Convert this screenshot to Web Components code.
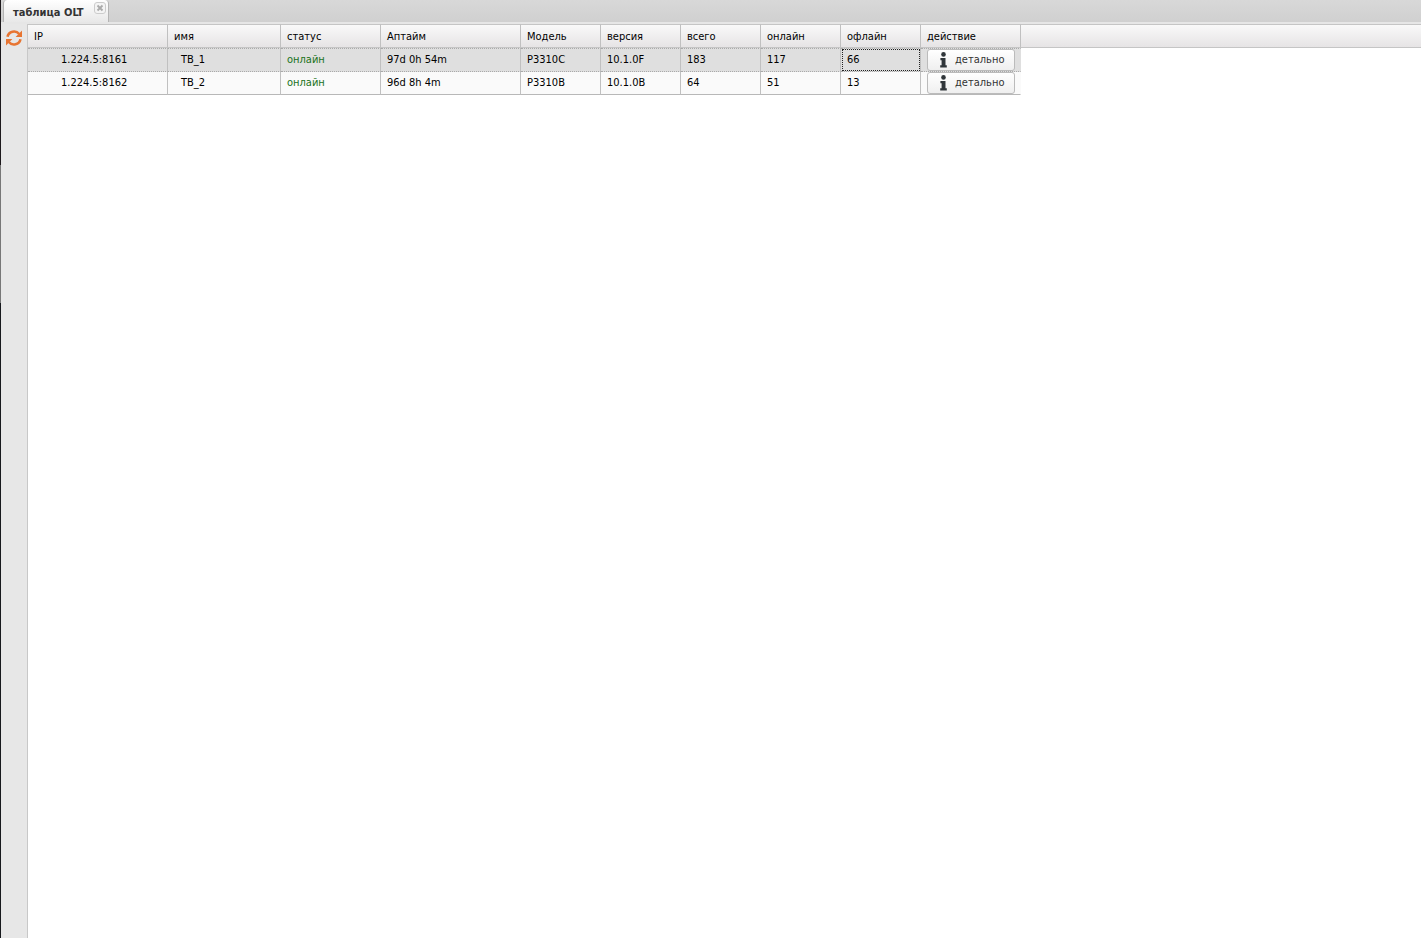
<!DOCTYPE html>
<html lang="ru">
<head>
<meta charset="utf-8">
<title>таблица OLT</title>
<style>
body {
    margin: 0;
    font-family: "DejaVu Sans Condensed", "Noto Sans", sans-serif;
    font-size: 11px;
    line-height: 14px;
    color: #000;
}
</style>
</head>
<body>
<olt-window>
    <tab-bar slot="tabs">таблица OLT</tab-bar>
    <side-tools slot="tools"></side-tools>
    <olt-table></olt-table>
</olt-window>

<script>
class OltWindow extends HTMLElement {
    constructor() {
        super();
        this.attachShadow({ mode: 'open' }).innerHTML = `
        <style>
        :host {
            display: flex;
            flex-direction: column;
            min-height: 100vh;
            box-sizing: border-box;
            padding-left: 1px;
            background: linear-gradient(#1d191c 0 165px, #777 165px 303px, #17191d 303px) no-repeat left / 1px 100%;
        }
        .body {
            display: flex;
            flex: 1;
            background: #fff;
        }
        main {
            flex: 1;
            min-width: 0;
        }
        </style>
        <slot name="tabs"></slot>
        <div class="body">
            <slot name="tools"></slot>
            <main><slot></slot></main>
        </div>
        `;
    }
}

class TabBar extends HTMLElement {
    constructor() {
        super();
        this.attachShadow({ mode: 'open' }).innerHTML = `
        <style>
        :host {
            display: flex;
            height: 24px;
            box-sizing: border-box;
            padding: 0 2px 2px;
            background: linear-gradient(#d8d8d8, #d0d0d0 22px, #e6e6e6 22px);
        }
        .tab {
            display: flex;
            box-sizing: border-box;
            padding-right: 2px;
            border: 1px solid #b4b4b4;
            border-top: 0;
            border-bottom: 0;
            border-radius: 4px 4px 0 0;
            background: linear-gradient(#fff, #e8e8e8);
        }
        button {
            font: inherit;
            color: #333;
            border: 0;
            background: none;
            cursor: pointer;
        }
        .title {
            padding: 3px 10px 0 9px;
            font-weight: bold;
        }
        .close {
            display: flex;
            width: 12px;
            height: 12px;
            margin-top: 2px;
            padding: 0;
        }
        </style>
        <div class="tab">
            <button class="title"><slot></slot></button>
            <button class="close" aria-label="закрыть">
                <svg width="12" height="12" viewBox="0 0 12 12">
                    <rect x=".5" y=".5" width="11" height="11" rx="2.5" fill="#f4f4f4" stroke="#ccc"/>
                    <path d="M3.5 3.5l5 5M8.5 3.5l-5 5" stroke="#aaa" stroke-width="1.8"/>
                </svg>
            </button>
        </div>
        `;
    }
}

class SideTools extends HTMLElement {
    constructor() {
        super();
        this.attachShadow({ mode: 'open' }).innerHTML = `
        <style>
        :host {
            display: block;
            width: 27px;
            box-sizing: border-box;
            padding: 5px 5px 0;
            border-right: 1px solid #c8c8c8;
            background: #e7e7e7;
        }
        button {
            display: flex;
            padding: 0;
            border: 0;
            background: none;
            cursor: pointer;
        }
        </style>
        <button aria-label="обновить">
            <svg width="16" height="18" viewBox="0 0 16 18" fill="none" stroke="#e87532" stroke-width="2.6">
                <path d="M1.5 7.8A6.7 6.7 0 0 1 13.2 5"/>
                <path d="M14.5 10.2A6.7 6.7 0 0 1 2.8 13"/>
                <path d="M16 1.6V8H9.6zM0 16.4V10h6.4z" fill="#e87532" stroke="none"/>
            </svg>
        </button>
        `;
    }
}

class DetailButton extends HTMLElement {
    constructor() {
        super();
        this.attachShadow({ mode: 'open' }).innerHTML = `
        <style>
        :host {
            display: block;
        }
        button {
            display: flex;
            align-items: center;
            gap: 8px;
            width: 100%;
            height: 22px;
            box-sizing: border-box;
            padding: 0 0 0 12px;
            border: 1px solid #bbb;
            border-radius: 3px;
            background: linear-gradient(#fff, #efefef);
            color: #333;
            font: inherit;
            cursor: pointer;
        }
        </style>
        <button>
            <svg width="7" height="16" viewBox="0 0 7 16" fill="#30363a">
                <circle cx="3.5" cy="2.4" r="2.3"/>
                <path d="M.4 6H5.5V13.2H6.8V15.6H.2V13.2H1.6V8.2H.4z"/>
            </svg>
            <slot></slot>
        </button>
        `;
    }
}

const COLUMNS = [
    ['ip', 'IP', 140],
    ['name', 'имя', 113],
    ['status', 'статус', 100],
    ['uptime', 'Аптайм', 140],
    ['model', 'Модель', 80],
    ['version', 'версия', 80],
    ['total', 'всего', 80],
    ['online', 'онлайн', 80],
    ['offline', 'офлайн', 80],
    ['action', 'действие', 100]
];

const ROWS = [
    { ip: '1.224.5:8161', name: 'TB_1', status: 'онлайн', uptime: '97d 0h 54m', model: 'P3310C', version: '10.1.0F', total: 183, online: 117, offline: 66 },
    { ip: '1.224.5:8162', name: 'TB_2', status: 'онлайн', uptime: '96d 8h 4m', model: 'P3310B', version: '10.1.0B', total: 64, online: 51, offline: 13 }
];

class OltTable extends HTMLElement {
    constructor() {
        super();
        this.attachShadow({ mode: 'open' }).innerHTML = `
        <style>
        :host {
            display: block;
        }
        table {
            width: 100%;
            table-layout: fixed;
            border-collapse: separate;
            border-spacing: 0;
        }
        th, td {
            box-sizing: border-box;
            height: 23px;
            padding: 0 6px;
            border-right: 1px solid #c0c0c0;
            text-align: left;
            font-weight: normal;
            white-space: nowrap;
        }
        th {
            height: 24px;
            padding-top: 2px;
            border-top: 1px solid #c5c5c5;
            border-bottom: 1px solid #c5c5c5;
            background: linear-gradient(#f9f9f9, #e6e4e5);
        }
        td {
            border-bottom: 1px solid #b8b8b8;
            background: #fafafa;
        }
        .selected td {
            height: 24px;
            border-top: 1px dotted #aaa;
            border-bottom: 1px dotted #aaa;
            background: #dfdfdf;
        }
        .ip {
            padding-left: 33px;
        }
        .name {
            padding-left: 13px;
        }
        .status {
            color: #1a721a;
        }
        .selected .focused {
            outline: 1px dotted #222;
            outline-offset: -2px;
        }
        .action {
            padding: 0 5px 0 6px;
            border-right-color: transparent;
        }
        th:last-child {
            border-right: 0;
        }
        tr td:last-child {
            border: 0;
            background: none;
        }
        </style>
        <table>
            <colgroup></colgroup>
            <thead><tr></tr></thead>
            <tbody></tbody>
        </table>
        `;
    }

    connectedCallback() {
        const root = this.shadowRoot;
        // the last column has no width and takes the rest of the window
        root.querySelector('colgroup').innerHTML =
            COLUMNS.map(([, , width]) => `<col style="width: ${width}px">`).join('') + '<col>';
        root.querySelector('thead tr').innerHTML =
            COLUMNS.map(([, title]) => `<th scope="col">${title}</th>`).join('') + '<th></th>';
        root.querySelector('tbody').innerHTML = ROWS.map((row, i) => this.renderRow(row, i === 0)).join('');
    }

    renderRow(row, selected) {
        const cells = COLUMNS.map(([key]) => {
            const value = key === 'action' ? '<detail-button>детально</detail-button>' : row[key];
            const focused = selected && key === 'offline' ? ' focused' : '';
            return `<td class="${key}${focused}">${value}</td>`;
        });
        return `<tr class="${selected ? 'selected' : ''}">${cells.join('')}<td></td></tr>`;
    }
}

window.customElements.define('olt-window', OltWindow);
window.customElements.define('tab-bar', TabBar);
window.customElements.define('side-tools', SideTools);
window.customElements.define('detail-button', DetailButton);
window.customElements.define('olt-table', OltTable);
</script>
</body>
</html>
